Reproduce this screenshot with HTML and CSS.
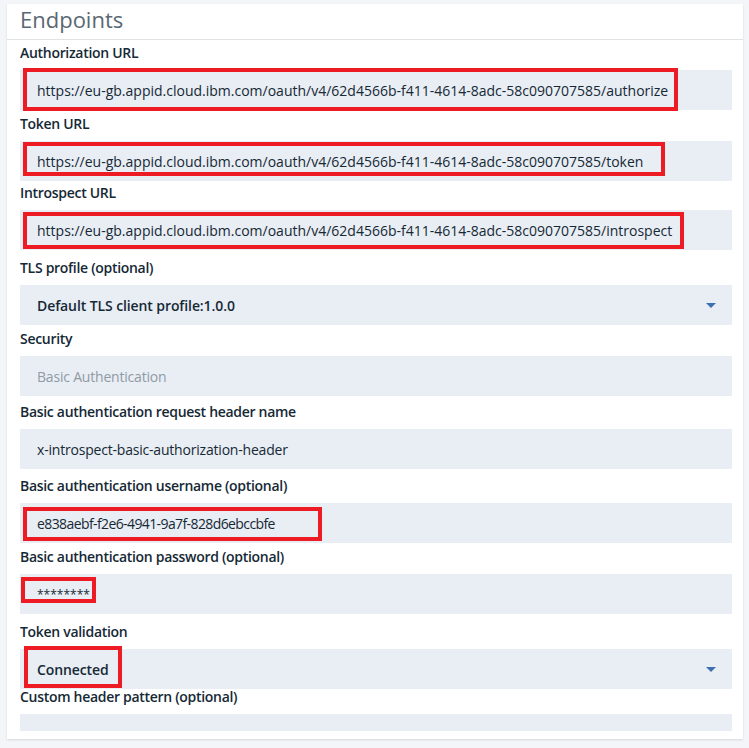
FILE: index.html
```html
<!DOCTYPE html>
<html lang="en">
<head>
<meta charset="utf-8">
<title>Endpoints</title>
<link rel="stylesheet" href="styles.css">
</head>
<body>
<section class="card">
  <h2 class="card-title">Endpoints</h2>
  <div class="card-body">
    <div class="field g2">
      <label class="label">Authorization URL</label>
      <div class="input"><span class="value url">https://eu-gb.appid.cloud.ibm.com/oauth/v4/62d4566b-f411-4614-8adc-58c090707585/authorize</span><span class="mark mark-auth"></span></div>
    </div>
    <div class="field g3">
      <label class="label">Token URL</label>
      <div class="input"><span class="value url">https://eu-gb.appid.cloud.ibm.com/oauth/v4/62d4566b-f411-4614-8adc-58c090707585/token</span><span class="mark mark-token"></span></div>
    </div>
    <div class="field g1">
      <label class="label">Introspect URL</label>
      <div class="input"><span class="value url">https://eu-gb.appid.cloud.ibm.com/oauth/v4/62d4566b-f411-4614-8adc-58c090707585/introspect</span><span class="mark mark-intro"></span></div>
    </div>
    <div class="field g7">
      <label class="label">TLS profile (optional)</label>
      <div class="input select"><span class="value strong">Default TLS client profile:1.0.0</span><span class="caret"></span></div>
    </div>
    <div class="field g3">
      <label class="label">Security</label>
      <div class="input"><span class="value muted">Basic Authentication</span></div>
    </div>
    <div class="field g5">
      <label class="label">Basic authentication request header name</label>
      <div class="input"><span class="value">x-introspect-basic-authorization-header</span></div>
    </div>
    <div class="field g6">
      <label class="label">Basic authentication username (optional)</label>
      <div class="input"><span class="value tight">e838aebf-f2e6-4941-9a7f-828d6ebccbfe</span><span class="mark mark-user"></span></div>
    </div>
    <div class="field g3">
      <label class="label">Basic authentication password (optional)</label>
      <div class="input"><span class="value pw">********</span><span class="mark mark-pass"></span></div>
    </div>
    <div class="field g7">
      <label class="label">Token validation</label>
      <div class="input select"><span class="value strong">Connected</span><span class="caret"></span><span class="mark mark-conn"></span></div>
    </div>
    <div class="field gneg">
      <label class="label">Custom header pattern (optional)</label>
      <div class="input short"></div>
    </div>
  </div>
</section>
</body>
</html>
```
FILE: styles.css
```css
html, body {
  margin: 0;
  padding: 0;
}
body {
  background: #f4f5f9;
  padding: 4px 6px 9px 7px;
  font-family: "Open Sans", "Noto Sans", "Liberation Sans", sans-serif;
  color: #152935;
}
.card {
  width: 736px;
  height: 735px;
  background: #ffffff;
  box-shadow: 0 1px 2px rgba(0, 0, 0, 0.12);
  overflow: hidden;
  box-sizing: border-box;
}
.card-title {
  margin: 0;
  height: 35px;
  box-sizing: content-box;
  padding: 0 0 0 13px;
  font-size: 22px;
  line-height: 31px;
  font-weight: 400;
  color: #5a6872;
  border-bottom: 1px solid #dfe3e6;
}
.card-body {
  padding: 0 11px 0 13px;
}
.field {
  display: flex;
  flex-direction: column;
}
.g1 { margin-top: 1px; }
.g2 { margin-top: 2px; }
.g3 { margin-top: 3px; }
.g5 { margin-top: 5px; }
.g6 { margin-top: 6px; }
.g7 { margin-top: 7px; }
.gneg { margin-top: -3px; }
.label {
  display: block;
  font-size: 14px;
  line-height: 20px;
  padding-top: 1px;
  font-weight: 600;
  letter-spacing: -0.3px;
  color: #152935;
  margin-bottom: 7px;
}
.input {
  position: relative;
  height: 40px;
  background: #e9edf4;
  display: flex;
  align-items: center;
  padding: 0 16px 0 17px;
  font-size: 14px;
  color: #152935;
  white-space: nowrap;
}
.input.short {
  height: 17px;
}
.value {
  letter-spacing: -0.2px;
}
.value.url {
  letter-spacing: 0;
}
.value.tight {
  letter-spacing: -0.6px;
}
.value.strong {
  font-weight: 600;
  letter-spacing: -0.1px;
}
.value.muted {
  color: #8f9ba4;
  letter-spacing: -0.2px;
}
.value.pw {
  font-size: 12px;
  letter-spacing: 0;
}
.select {
  justify-content: space-between;
}
.caret {
  width: 0;
  height: 0;
  border-left: 5px solid transparent;
  border-right: 5px solid transparent;
  border-top: 5px solid #3d70b2;
}
.mark {
  position: absolute;
  box-sizing: border-box;
  border: 4px solid #ed1c24;
}
.mark-auth { left: 3px; top: -2px; width: 655px; height: 43px; }
.mark-token { left: 3px; top: 1px; width: 642px; height: 34px; }
.mark-intro { left: 3px; top: 2px; width: 661px; height: 37px; }
.mark-user { left: 3px; top: 4px; width: 299px; height: 34px; }
.mark-pass { left: 1px; top: 3px; width: 75px; height: 26px; }
.mark-conn { left: 4px; top: -3px; width: 98px; height: 42px; }
```
